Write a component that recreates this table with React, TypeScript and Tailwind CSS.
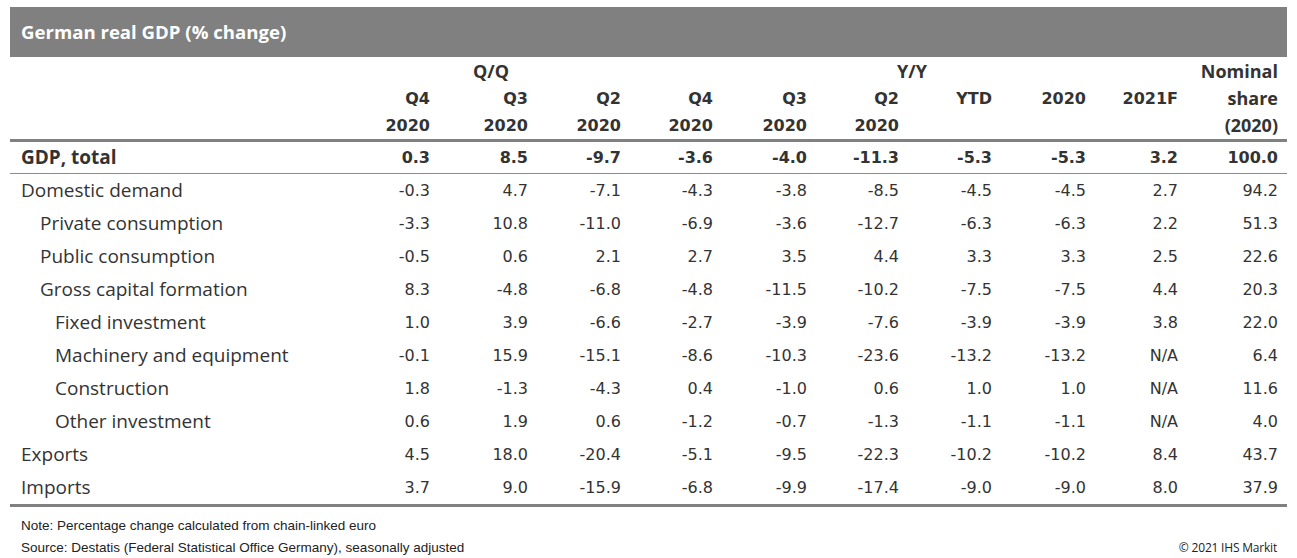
// German real GDP table
const label = "font-['Open_Sans',sans-serif]";
const num = "font-['DejaVu_Sans',sans-serif]";

const cols = "grid grid-cols-[327px_93px_98px_93px_92px_94px_92px_93px_94px_92px_100px] pr-3";

type Row = { name: string; level: number; values: string[] };

const rows: Row[] = [
  { name: "Domestic demand", level: 0, values: ["-0.3", "4.7", "-7.1", "-4.3", "-3.8", "-8.5", "-4.5", "-4.5", "2.7", "94.2"] },
  { name: "Private consumption", level: 1, values: ["-3.3", "10.8", "-11.0", "-6.9", "-3.6", "-12.7", "-6.3", "-6.3", "2.2", "51.3"] },
  { name: "Public consumption", level: 1, values: ["-0.5", "0.6", "2.1", "2.7", "3.5", "4.4", "3.3", "3.3", "2.5", "22.6"] },
  { name: "Gross capital formation", level: 1, values: ["8.3", "-4.8", "-6.8", "-4.8", "-11.5", "-10.2", "-7.5", "-7.5", "4.4", "20.3"] },
  { name: "Fixed investment", level: 2, values: ["1.0", "3.9", "-6.6", "-2.7", "-3.9", "-7.6", "-3.9", "-3.9", "3.8", "22.0"] },
  { name: "Machinery and equipment", level: 2, values: ["-0.1", "15.9", "-15.1", "-8.6", "-10.3", "-23.6", "-13.2", "-13.2", "N/A", "6.4"] },
  { name: "Construction", level: 2, values: ["1.8", "-1.3", "-4.3", "0.4", "-1.0", "0.6", "1.0", "1.0", "N/A", "11.6"] },
  { name: "Other investment", level: 2, values: ["0.6", "1.9", "0.6", "-1.2", "-0.7", "-1.3", "-1.1", "-1.1", "N/A", "4.0"] },
  { name: "Exports", level: 0, values: ["4.5", "18.0", "-20.4", "-5.1", "-9.5", "-22.3", "-10.2", "-10.2", "8.4", "43.7"] },
  { name: "Imports", level: 0, values: ["3.7", "9.0", "-15.9", "-6.8", "-9.9", "-17.4", "-9.0", "-9.0", "8.0", "37.9"] },
];

const total = ["0.3", "8.5", "-9.7", "-3.6", "-4.0", "-11.3", "-5.3", "-5.3", "3.2", "100.0"];

const indent = ["pl-[11px]", "pl-[30px]", "pl-[45px]"];

export default function App() {
  return (
    <div className="w-[1297px] h-[558px] bg-white pt-[7px] px-[10px] text-[#333333]">
      <div className="h-[50px] bg-[#808080] flex items-center pl-[11px]">
        <h1 className={`${label} text-white font-bold text-[18.6px]`}>German real GDP (% change)</h1>
      </div>

      <div className={`${cols} pt-[1px] font-bold text-[16px] leading-[27px] text-right`}>
        <div />
        <div />
        <div className={`${label} text-[18px] pr-[19px]`}>Q/Q</div>
        <div />
        <div />
        <div />
        <div />
        <div className={`${label} text-[18px] text-left -ml-[2px]`}>Y/Y</div>
        <div />
        <div />
        <div className={`${label} text-[18px]`}>Nominal</div>

        <div />
        {["Q4", "Q3", "Q2", "Q4", "Q3", "Q2", "YTD", "2020", "2021F"].map((h, i) => (
          <div key={i} className={num}>{h}</div>
        ))}
        <div className={`${label} text-[18px]`}>share</div>

        <div />
        {["2020", "2020", "2020", "2020", "2020", "2020", "", "", ""].map((h, i) => (
          <div key={i} className={num}>{h}</div>
        ))}
        <div className={`${label} text-[18px]`}>(2020)</div>
      </div>

      <div className="h-[3px] bg-[#808080]" />

      <div className={`${cols} h-[32px] items-center font-bold border-b border-[#8c8c8c]`}>
        <div className={`${label} text-[19px] pl-[11px]`}>GDP, total</div>
        {total.map((v, i) => (
          <div key={i} className={`${num} text-[16px] text-right`}>{v}</div>
        ))}
      </div>

      {rows.map((r) => (
        <div key={r.name} className={`${cols} h-[33px] items-center`}>
          <div className={`${label} text-[19px] ${indent[r.level]}`}>{r.name}</div>
          {r.values.map((v, i) => (
            <div key={i} className={`${num} text-[16px] text-right`}>{v}</div>
          ))}
        </div>
      ))}

      <div className="h-[3px] bg-[#808080]" />

      <div className="flex justify-between items-end pl-[11px] pr-[10px] pt-[8px] font-['Liberation_Sans',sans-serif] text-[13.5px] leading-[22px] text-[#222222]">
        <div>
          <p>Note: Percentage change calculated from chain-linked euro</p>
          <p>Source: Destatis (Federal Statistical Office Germany), seasonally adjusted</p>
        </div>
        <p className={`${label} text-[12px] tracking-[-0.2px]`}>© 2021 IHS Markit</p>
      </div>
    </div>
  );
}
